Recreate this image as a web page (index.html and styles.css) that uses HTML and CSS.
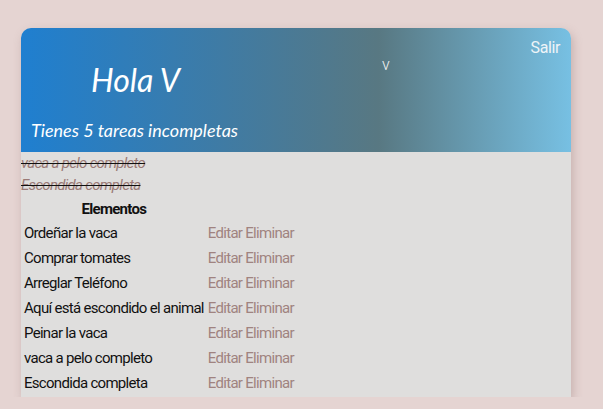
FILE: index.html
```html
<!DOCTYPE html>
<html lang="es">
<head>
<meta charset="utf-8">
<link rel="stylesheet" href="styles.css">
</head>
<body>
<div class="card">
  <header class="head">
    <div class="top">
      <h1 class="hello">Hola V</h1>
      <span class="user">v</span>
      <a class="logout">Salir</a>
    </div>
    <h2 class="count">Tienes 5 tareas incompletas</h2>
  </header>
  <div class="content">
    <p class="done">vaca a pelo completo</p>
    <p class="done">Escondida completa</p>
    <table class="tasks">
      <thead><tr><th>Elementos</th><th></th></tr></thead>
      <tbody>
        <tr><td>Ordeñar la vaca</td><td class="acts">Editar Eliminar</td></tr>
        <tr><td>Comprar tomates</td><td class="acts">Editar Eliminar</td></tr>
        <tr><td>Arreglar Teléfono</td><td class="acts">Editar Eliminar</td></tr>
        <tr><td>Aquí está escondido el animal</td><td class="acts">Editar Eliminar</td></tr>
        <tr><td>Peinar la vaca</td><td class="acts">Editar Eliminar</td></tr>
        <tr><td>vaca a pelo completo</td><td class="acts">Editar Eliminar</td></tr>
        <tr><td>Escondida completa</td><td class="acts">Editar Eliminar</td></tr>
      </tbody>
    </table>
  </div>
</div>
</body>
</html>
```

FILE: styles.css
```css
html, body {
  margin: 0;
  background: #e5d4d2;
}
body {
  padding: 28px 0 0 21px;
  font-family: Roboto, "DejaVu Sans Condensed", sans-serif;
  letter-spacing: -0.7px;
}
.card {
  width: 550px;
  background: #dfdedd;
  border-radius: 10px 10px 0 0;
  box-shadow: 2px 4px 10px rgba(160, 130, 128, 0.45);
}
.head {
  height: 124px;
  box-sizing: border-box;
  border-radius: 10px 10px 0 0;
  background: linear-gradient(to right, #1f7fd0 0%, #587882 65%, #77c0e3 100%);
  color: #fff;
  display: flex;
  flex-direction: column;
  justify-content: space-between;
  padding: 0 10px 11px 10px;
  letter-spacing: 0;
}
.top {
  display: flex;
  align-items: flex-start;
}
.hello {
  margin: 32px 0 0 60px;
  font: italic 400 32px/40px Lato, sans-serif;
  width: 291px;
}
.user {
  margin-top: 27px;
  font: 300 16px/20px Roboto, sans-serif;
  color: #f0f0f0;
}
.logout {
  margin: 10px 1px 0 auto;
  font: 400 16px/20px Roboto, sans-serif;
  color: #eef4f8;
  letter-spacing: -0.4px;
}
.count {
  margin: 0;
  font: italic 400 18px/22px Lato, sans-serif;
}
.content {
  padding-bottom: 0;
}
.done {
  margin: 0;
  font-style: italic;
  font-size: 15px;
  line-height: 22px;
  color: #9a7a76;
  text-decoration: line-through;
  text-decoration-color: #111;
}
.tasks {
  border-spacing: 2px;
  font-size: 15px;
  color: #111;
}
.tasks th {
  font-weight: 700;
  padding: 1px;
  line-height: 20px;
}
.tasks td {
  padding: 1px;
  line-height: 21px;
}
.acts {
  color: #a08380;
}
```
